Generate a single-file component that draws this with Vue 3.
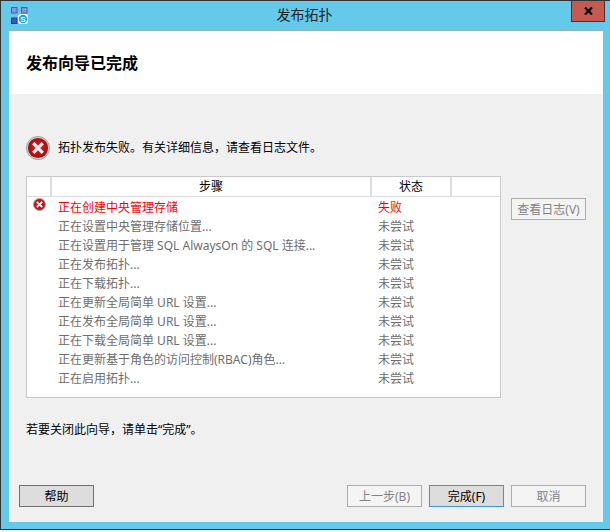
<script setup>
const steps = [
  ['正在创建中央管理存储', '失败'],
  ['正在设置中央管理存储位置...', '未尝试'],
  ['正在设置用于管理 SQL AlwaysOn 的 SQL 连接...', '未尝试'],
  ['正在发布拓扑...', '未尝试'],
  ['正在下载拓扑...', '未尝试'],
  ['正在更新全局简单 URL 设置...', '未尝试'],
  ['正在发布全局简单 URL 设置...', '未尝试'],
  ['正在下载全局简单 URL 设置...', '未尝试'],
  ['正在更新基于角色的访问控制(RBAC)角色...', '未尝试'],
  ['正在启用拓扑...', '未尝试'],
]
</script>

<template>
  <div class="screen">
    <div class="window">
      <div class="titlebar">
        <svg class="appicon" width="17" height="17" viewBox="0 0 17 17">
          <path d="M3 3L3 13M3 3L13 3M13 3L13 9M3 3L10 10" stroke="#7f9fd8" stroke-width="1.2" fill="none" stroke-dasharray="1 1" />
          <rect x="0.5" y="0.5" width="5.5" height="5.5" fill="#7a9be0" stroke="#3f63b8" />
          <rect x="10.5" y="0.5" width="5.5" height="5.5" fill="#7a9be0" stroke="#3f63b8" />
          <rect x="0.5" y="11" width="5.5" height="5.5" fill="#3a5cb8" stroke="#2a4490" />
          <rect x="7" y="7" width="10" height="10" rx="3" fill="#fff" />
          <circle cx="12" cy="12" r="4.3" fill="#1ba7e0" />
          <text x="12" y="15" class="s">S</text>
        </svg>
        <span class="title">发布拓扑</span>
        <button class="close" aria-label="关闭">
          <svg width="9" height="8" viewBox="0 0 9 8"><path d="M1 0.5L8 7.5M8 0.5L1 7.5" stroke="#000" stroke-width="2.2" /></svg>
        </button>
      </div>
      <div class="client">
        <header class="head"><h1>发布向导已完成</h1></header>
        <main class="body">
          <div class="message">
            <svg width="24" height="24" viewBox="0 0 25 25">
              <defs>
                <radialGradient id="err" cx="0.5" cy="0.5" r="0.55">
                  <stop offset="0" stop-color="#d8262b" />
                  <stop offset="1" stop-color="#9c0a0e" />
                </radialGradient>
              </defs>
              <circle cx="12.5" cy="12.5" r="12" fill="#d0d0d0" stroke="#a0a0a0" />
              <circle cx="12.5" cy="12.5" r="10.5" fill="url(#err)" />
              <path d="M7.5 7.5L17.5 17.5M17.5 7.5L7.5 17.5" stroke="#ececec" stroke-width="3.4" />
            </svg>
            <span>拓扑发布失败。有关详细信息，请查看日志文件。</span>
          </div>
          <div class="steps-row">
            <div class="table">
              <div class="thead">
                <div class="th c0"></div>
                <div class="th c1">步骤</div>
                <div class="th c2">状态</div>
                <div class="th c3"></div>
              </div>
              <div v-for="(s, i) in steps" :key="i" class="row" :class="{ failed: i === 0 }">
                <div class="c0 iconcell">
                  <svg v-if="i === 0" width="13" height="13" viewBox="0 0 13 13">
                    <circle cx="6.5" cy="6.5" r="6" fill="#b01e22" stroke="#a8a0a0" />
                    <path d="M3.8 3.8L9.2 9.2M9.2 3.8L3.8 9.2" stroke="#f2f2f2" stroke-width="1.8" />
                  </svg>
                </div>
                <div class="c1 cell">{{ s[0] }}</div>
                <div class="c2 cell">{{ s[1] }}</div>
              </div>
            </div>
            <button class="btn log" disabled>查看日志(V)</button>
          </div>
          <p class="hint">若要关闭此向导，请单击“完成”。</p>
          <footer class="foot">
            <button class="btn normal">帮助</button>
            <div class="nav">
              <button class="btn" disabled>上一步(B)</button>
              <button class="btn normal primary">完成(F)</button>
              <button class="btn" disabled>取消</button>
            </div>
          </footer>
        </main>
      </div>
    </div>
  </div>
</template>

<style>
html, body { margin: 0; background: #f4f4f4; }
</style>

<style scoped>
.screen {
  width: 610px;
  height: 532px;
  overflow: hidden;
  font-family: "Noto Sans", "Noto Sans CJK SC", sans-serif;
  font-size: 12px;
  color: #000;
}
.window {
  width: 610px;
  height: 530px;
  border: 1px solid #333;
  border-right: 0;
  background: #65c9ea;
  box-sizing: border-box;
  display: flex;
  flex-direction: column;
  padding: 0 7px 7px 8px;
}
.titlebar {
  height: 30px;
  flex: none;
  display: flex;
  align-items: flex-start;
  position: relative;
}
.appicon { margin: 6px 0 0 2px; }
.s { font: bold 8px "Liberation Sans", sans-serif; fill: #fff; text-anchor: middle; }
.title {
  position: absolute;
  left: 0;
  right: 3px;
  top: 4px;
  text-align: center;
  font-size: 14px;
  line-height: 20px;
  color: #222;
}
.close {
  position: absolute;
  right: -2px;
  top: 0;
  width: 34px;
  height: 21px;
  padding: 0;
  box-sizing: border-box;
  background: #c45a50;
  border: 1px solid #4a3030;
  border-top: 0;
  display: flex;
  align-items: center;
  justify-content: center;
}
.client {
  flex: 1;
  display: flex;
  flex-direction: column;
  background: #f0f0f0;
  box-shadow: 0 -1px 0 #8fb4c6;
}
.head {
  height: 63px;
  flex: none;
  background: #fff;
  box-sizing: border-box;
  padding-left: 17px;
  display: flex;
  align-items: center;
}
h1 {
  margin: 0;
  font-size: 16px;
  font-weight: 700;
  line-height: 24px;
}
.body {
  flex: 1;
  display: flex;
  flex-direction: column;
  padding: 42px 17px 15px 17px;
}
.message {
  display: flex;
  align-items: center;
  gap: 8px;
  height: 24px;
  line-height: 22px;
}
.steps-row {
  display: flex;
  align-items: flex-start;
  gap: 10px;
  margin-top: 16px;
}
.table {
  width: 475px;
  height: 222px;
  flex: none;
  box-sizing: border-box;
  border: 1px solid #c9c9c9;
  background: #fff;
}
.thead {
  display: flex;
  height: 19px;
  border-bottom: 1px solid #dcdcdc;
}
.th {
  box-sizing: border-box;
  border-right: 2px solid #dcdcdc;
  text-align: center;
  line-height: 20px;
  font-size: 12px;
}
.th.c3 { border-right: 0; flex: 1; }
.c0 { width: 25px; flex: none; }
.c1 { width: 320px; flex: none; }
.c2 { width: 80px; flex: none; }
.row {
  display: flex;
  height: 19px;
  color: #6d6d6d;
}
.failed { color: #f00; }
.cell {
  line-height: 21px;
  box-sizing: border-box;
  white-space: nowrap;
}
.c1.cell { padding-left: 6px; }
.c2.cell { padding-left: 6px; }
.iconcell {
  display: flex;
  padding: 1px 0 0 6px;
  box-sizing: border-box;
}
.btn {
  box-sizing: border-box;
  width: 75px;
  height: 22px;
  padding: 2px 0 0;
  border: 1px solid #adadad;
  background: #f4f4f4;
  color: #838383;
  font: inherit;
  line-height: 18px;
}
.log { margin-top: 22px; }
.normal {
  background: #dddddd;
  color: #000;
  border-color: #707070;
}
.primary { border-color: #3c94e8; }
.hint {
  margin: 21px 0 0;
  line-height: 22px;
}
.foot {
  margin-top: auto;
  display: flex;
  justify-content: space-between;
  margin-left: -7px;
}
.nav {
  display: flex;
  gap: 7px;
}
</style>
